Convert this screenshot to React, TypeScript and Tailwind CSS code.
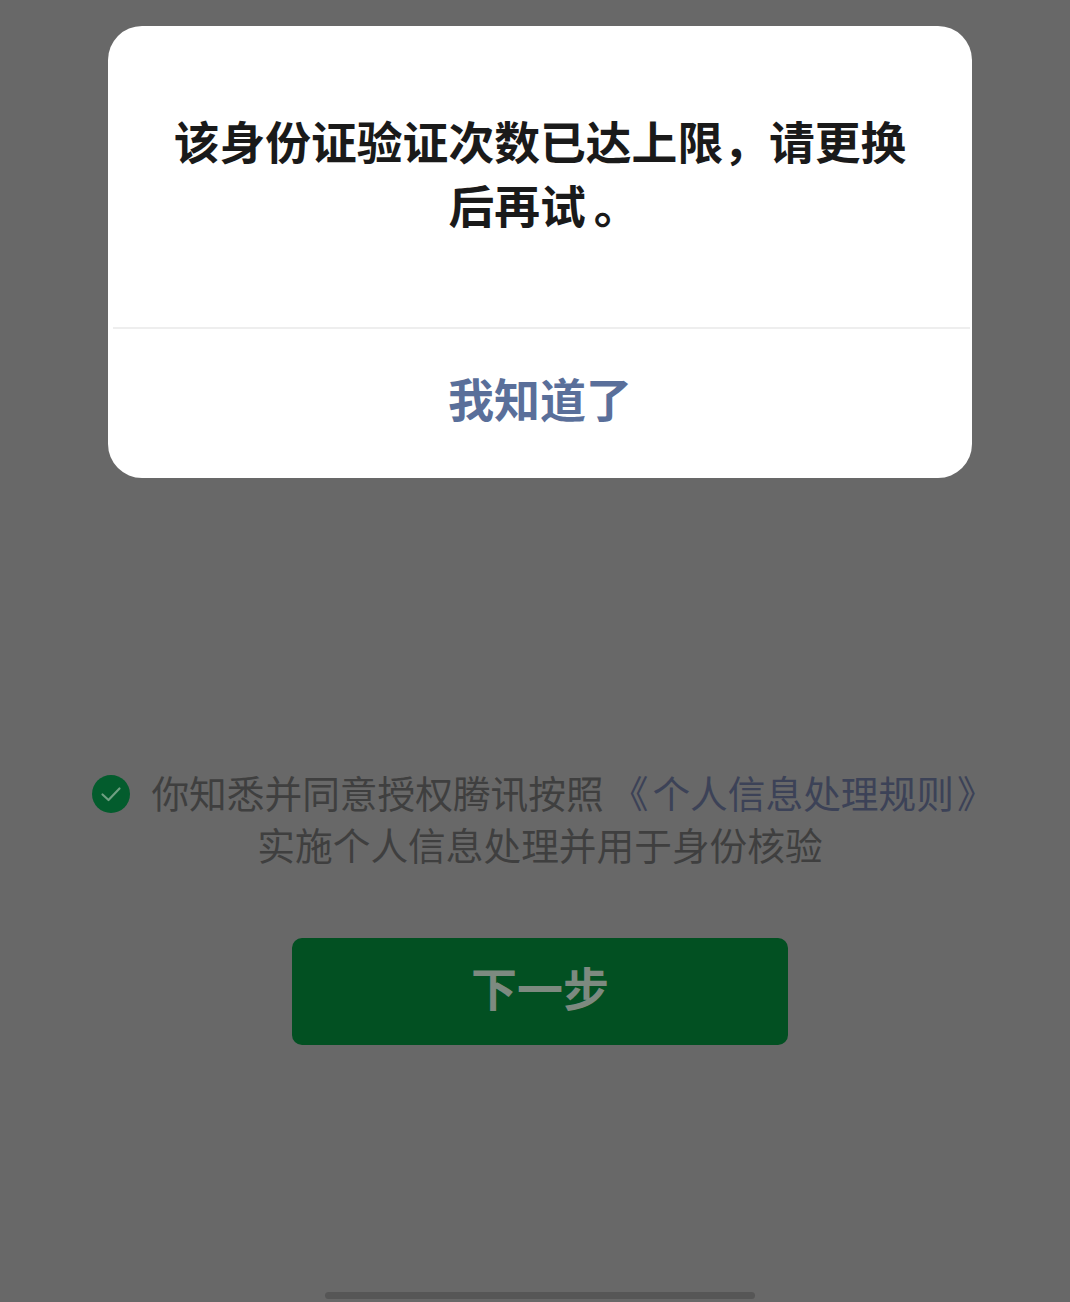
const cjk = "font-['Noto_Sans_CJK_SC','Liberation_Sans',sans-serif]"

export default function App() {
  return (
    <div className={`${cjk} flex h-[1302px] flex-col items-center overflow-hidden bg-[#686868] pt-[26px] pl-[10px]`}>
      <div className="flex h-[452px] w-[864px] flex-col rounded-[34px] bg-white">
        <div className="flex h-[301px] items-center justify-center px-[60px] pb-[10px] text-center text-[45.8px] leading-[64px] font-bold text-[#1a1a1a]">
          <p>
            该身份证验证次数已达上限，请更换
            <br />
            后再试<span className="-mr-[8px] pl-[8px]">。</span>
          </p>
        </div>
        <div className="mr-[2px] ml-[5px] h-[2px] bg-[#eeeeee]" />
        <div className="flex flex-1 items-center justify-center pb-[12px] text-[46px] font-bold text-[#5a6f9a]">我知道了</div>
      </div>

      <div className="mt-[288px] flex w-full flex-col items-center text-[37.7px] leading-[52px] text-[#3f3f3f]">
        <div className="flex items-center whitespace-nowrap">
          <span className="mt-[4px] mr-[21px] flex h-[38px] w-[38px] items-center justify-center rounded-full bg-[#035c2d]">
            <svg width="22" height="22" viewBox="0 0 22 22" fill="none" stroke="#6f9f82" strokeWidth="2.2" strokeLinecap="round" strokeLinejoin="round">
              <path d="M2.5 11.5l6 5.5 11-11.5" />
            </svg>
          </span>
          <span>你知悉并同意授权腾讯按照</span>
          <span className="ml-[7px] text-[#3c4257]">
            《<span className="ml-[4px]">个人信息处理规则</span>
            <span className="-mr-[7px] pl-[3px]">》</span>
          </span>
        </div>
        <div className="whitespace-nowrap">实施个人信息处理并用于身份核验</div>
      </div>

      <button className="mt-[68px] flex h-[107px] w-[496px] items-center justify-center rounded-[10px] bg-[#025022] pb-[10px] text-[46px] font-bold text-[#7d8a80]">
        下一步
      </button>

      <div className="mt-[247px] h-[7px] w-[430px] shrink-0 rounded-full bg-[#565656]" />
    </div>
  )
}
